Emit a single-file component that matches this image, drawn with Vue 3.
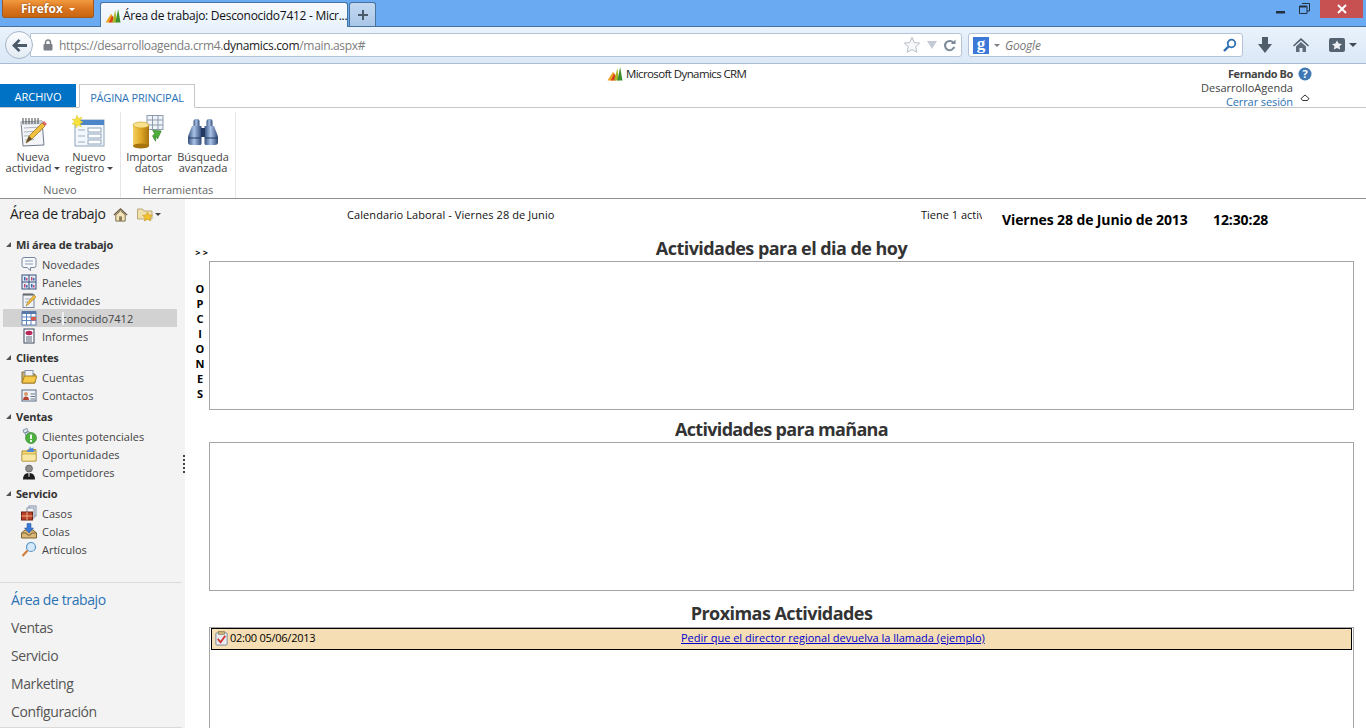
<template>
  <div class="page">
    <!-- barra de titulo de Firefox -->
    <div class="titlebar">
      <div class="ff-button">Firefox <span class="ff-caret"></span></div>
      <div class="tab">
        <svg class="tab-logo" viewBox="0 0 16 16" v-html="icons.logo"></svg>
        <span class="tab-title">Área de trabajo: Desconocido7412 - Micr...</span>
      </div>
      <div class="tab-new">
        <svg viewBox="0 0 12 12" width="12" height="12"><path d="M5 1h2v4h4v2H7v4H5V7H1V5h4z" fill="#4b5a6b" /></svg>
      </div>
      <div class="win-controls">
        <svg class="win-min" viewBox="0 0 10 10" width="10" height="10"><rect x="0" y="7" width="9" height="2.5" fill="#22303f" /></svg>
        <svg class="win-max" viewBox="0 0 11 11" width="11" height="11">
          <path d="M3 .5h7.5V8H8M.5 3H8v7.5H.5z" fill="none" stroke="#22303f" stroke-width="1" />
          <rect x="1" y="3" width="6.5" height="1.5" fill="#22303f" />
        </svg>
        <div class="win-close">
          <svg viewBox="0 0 10 10" width="10" height="10"><path d="M1 1l8 8M9 1l-8 8" stroke="#fff" stroke-width="2" /></svg>
        </div>
      </div>
    </div>

    <!-- barra de navegacion -->
    <div class="navbar">
      <div class="back-btn">
        <svg viewBox="0 0 18 16" width="17" height="15"><path d="M8 1L1 8l7 7 2-2-3.4-3.4H17V6.400H6.600L10 3z" fill="#4d5a68" /></svg>
      </div>
      <div class="urlbar">
        <svg class="lock" viewBox="0 0 10 12" width="10" height="12">
          <path d="M2.500 5V3.500a2.500 2.500 0 0 1 5 0V5" fill="none" stroke="#7a7f86" stroke-width="1.500" />
          <rect x="0.500" y="5" width="9" height="6.500" rx="1" fill="#7a7f86" />
        </svg>
        <span class="url"><span class="url-dim">https://desarrolloagenda.crm4.</span>dynamics.com<span class="url-dim">/main.aspx#</span></span>
        <svg class="url-star" viewBox="0 0 18 18" width="18" height="18">
          <path d="M9 1.500l2.300 5 5.400.6-4 3.700 1.100 5.400L9 13.500l-4.800 2.700 1.100-5.400-4-3.700 5.400-.6z" fill="#f6f8fb" stroke="#b5bcc6" />
        </svg>
        <svg class="url-drop" viewBox="0 0 10 8" width="10" height="8"><path d="M0 0h10L5 8z" fill="#c3cad3" /></svg>
        <svg class="url-reload" viewBox="0 0 14 14" width="13" height="13">
          <path d="M11.500 4.500A5 5 0 1 0 12 8.500" fill="none" stroke="#7d8a99" stroke-width="2.200" />
          <path d="M8.500 5.500h5v-5z" fill="#7d8a99" />
        </svg>
      </div>
      <div class="searchbar">
        <span class="g-badge">g</span>
        <span class="g-caret"></span>
        <span class="search-text">Google</span>
        <svg class="search-glass" viewBox="0 0 14 14" width="14" height="14">
          <circle cx="8.500" cy="5.500" r="3.800" fill="none" stroke="#2a6fb0" stroke-width="1.800" />
          <path d="M5.500 8.500L1 13" stroke="#2a6fb0" stroke-width="2.400" />
        </svg>
      </div>
      <svg class="tool-down" viewBox="0 0 14 16" width="14" height="16"><path d="M4 0h6v7h4l-7 9-7-9h4z" fill="#4f5c6a" /></svg>
      <svg class="tool-home" viewBox="0 0 16 16" width="16" height="16">
        <path d="M8 1L0 8.500l1 1L8 3.200l7 6.300 1-1z" fill="#4f5c6a" />
        <path d="M3 9.500L8 5l5 4.500V15H9.500v-4h-3v4H3z" fill="#5f6c7a" />
      </svg>
      <div class="tool-marks">
        <svg viewBox="0 0 16 14" width="16" height="14">
          <rect width="16" height="14" rx="2" fill="#55626f" />
          <path d="M8 2.500l1.600 3 3.400.4-2.500 2.300.7 3.300L8 10l-3.200 1.500.7-3.300L3 5.900l3.400-.4z" fill="#eef2f6" />
        </svg>
        <span class="tool-caret"></span>
      </div>
    </div>

    <!-- cabecera CRM -->
    <div class="crm-head">
      <div class="crm-tabs">
        <div class="crm-tab-file">ARCHIVO</div>
        <div class="crm-tab-home">PÁGINA PRINCIPAL</div>
      </div>
      <div class="crm-brand">
        <svg viewBox="0 0 16 16" width="16" height="15" v-html="icons.logo"></svg>
        <span>Microsoft Dynamics CRM</span>
      </div>
      <div class="crm-user">
        <div class="user-lines">
          <div class="user-name">Fernando Bo</div>
          <div class="user-org">DesarrolloAgenda</div>
          <div class="user-out">Cerrar sesión</div>
        </div>
        <div class="user-side">
          <svg viewBox="0 0 14 14" width="14" height="14">
            <circle cx="7" cy="7" r="6.500" fill="#3f78b5" />
            <text x="7" y="11" class="help-mark" text-anchor="middle">?</text>
          </svg>
          <svg class="user-chevron" viewBox="0 0 10 8" width="10" height="8">
            <path d="M1 4.500L5 1l4 3.500-1.500 2h-5z" fill="none" stroke="#333" stroke-width="1" />
          </svg>
        </div>
      </div>
    </div>

    <!-- ribbon -->
    <div class="ribbon">
      <div v-for="group in ribbon" :key="group.name" class="rb-group" :class="group.cls">
        <div class="rb-buttons">
          <div v-for="btn in group.buttons" :key="btn.top" class="rb-btn">
            <svg class="rb-icon" viewBox="0 0 34 34" width="34" height="34" v-html="icons[btn.icon]"></svg>
            <div class="rb-label">
              {{ btn.top }}<br />{{ btn.bottom }}<span v-if="btn.menu" class="rb-caret"></span>
            </div>
          </div>
        </div>
        <div class="rb-name">{{ group.name }}</div>
      </div>
    </div>

    <div class="workspace">
      <!-- navegacion lateral -->
      <aside class="sidebar">
        <div class="side-head">
          <span>Área de trabajo</span>
          <svg class="side-home" viewBox="0 0 16 16" width="15" height="15">
            <path d="M8 1L.5 8l1 1L8 3l6.500 6 1-1z" fill="#6b5a3c" />
            <path d="M3 8.500L8 4l5 4.500V15H3z" fill="#f4e3b8" stroke="#7a6a4a" />
            <rect x="6.500" y="10" width="3" height="5" fill="#8a7a58" />
          </svg>
          <svg class="side-fav" viewBox="0 0 16 16" width="16" height="16">
            <path d="M.5 3h5l1.500 2h8v8H.5z" fill="#efe0ae" stroke="#b8a878" />
            <path d="M10.500 6l1.500 3 3.400.4-2.500 2.300.7 3.300-3.100-1.700L7.400 15l.7-3.300-2.500-2.300L9 9z" fill="#f2c22c" stroke="#c08a14" stroke-width=".5" />
          </svg>
          <span class="side-caret"></span>
        </div>

        <div v-for="section in sections" :key="section.title" class="side-section">
          <div class="side-title"><span class="tri"></span>{{ section.title }}</div>
          <div class="side-rows">
            <div
              v-for="item in section.items"
              :key="item.label"
              class="side-row"
              :class="{ selected: item.selected }"
            >
              <svg class="side-icon" viewBox="0 0 16 16" width="16" height="16" v-html="icons[item.icon]"></svg>
              <span>{{ item.label }}</span>
              <span v-if="item.selected" class="ibeam"></span>
            </div>
          </div>
        </div>

        <div class="splitter"></div>

        <div class="side-bottom">
          <div v-for="(area, i) in areas" :key="area" class="area" :class="{ active: i === 0 }">{{ area }}</div>
        </div>
      </aside>

      <!-- contenido -->
      <main class="content">
        <div class="top-line">
          <span class="cal-title">Calendario Laboral - Viernes 28 de Junio</span>
          <span class="notice">Tiene 1 actividad</span>
          <span class="today">Viernes 28 de Junio de 2013</span>
          <span class="clock">12:30:28</span>
        </div>
        <div class="content-body">
          <div class="options">
            <div class="opt-arrows">&gt; &gt;</div>
            <div class="opt-letters">
              <span v-for="(l, i) in 'OPCIONES'" :key="i">{{ l }}</span>
            </div>
          </div>
          <div class="lists">
            <h2 class="list-title">Actividades para el dia de hoy</h2>
            <div class="list-box box-today"></div>
            <h2 class="list-title title-tomorrow">Actividades para mañana</h2>
            <div class="list-box box-tomorrow"></div>
            <h2 class="list-title title-next">Proximas Actividades</h2>
            <div class="list-box box-next">
              <div class="act-row">
                <div class="act-when">
                  <svg viewBox="0 0 16 16" width="15" height="15">
                    <rect x="2" y="2" width="12" height="13" rx="1" fill="#e9edf3" stroke="#7b8794" />
                    <rect x="5" y="0.500" width="6" height="3" fill="#c9b27a" stroke="#7d6a3c" stroke-width=".6" />
                    <path d="M4 8.500l3 3.500 5-7" fill="none" stroke="#d13a2e" stroke-width="2" />
                  </svg>
                  <span>02:00 05/06/2013</span>
                </div>
                <a class="act-link" href="#">Pedir que el director regional devuelva la llamada (ejemplo)</a>
              </div>
            </div>
          </div>
        </div>
      </main>
    </div>
  </div>
</template>

<script setup>
const logoSvg = `
  <path d="M0 15.500L6 6l2.500 4-3 5.500z" fill="#eda31e"/>
  <path d="M3.500 15.500L7 8l2.500 4-1 3.500z" fill="#d9401f"/>
  <path d="M7 15.500L10.500 2l1.500 13.500z" fill="#a8b82a"/>
  <path d="M10.500 15.500L13.500 1 16 15.500z" fill="#3f8f2e"/>`

const notepad = `
  <path d="M5 7l21-1 2 24-21 1z" fill="#f3f5f8" stroke="#6f7b88"/>
  <path d="M5 7l21-1v3L5 10z" fill="#c8d0da"/>
  <path d="M7 3v6M10 3v6M13 3v6M16 3v6M19 3v6M22 3v6" stroke="#666" stroke-width="1.200"/>
  <path d="M8 13l17-1M8 17l17-1M8 21l10-.5M9 25l9-.5" stroke="#aab4c0"/>
  <path d="M10 28l3-7L26 8l3 3-13 13z" fill="#f0c040" stroke="#a07818" stroke-width=".8"/>
  <path d="M26 8l2-2 3 3-2 2z" fill="#d86a6a"/>
  <path d="M10 28l3-7 3 3z" fill="#5a4a30"/>`

const record = `
  <rect x="3" y="5" width="29" height="26" fill="#f3f6fa" stroke="#8ea4bc"/>
  <rect x="3" y="5" width="29" height="5" fill="#4c86c8"/>
  <path d="M6 15h7M6 21h7M6 27h7" stroke="#9db0c4"/>
  <rect x="16" y="13" width="13" height="4" fill="#fff" stroke="#8ea4bc"/>
  <rect x="16" y="19" width="13" height="4" fill="#fff" stroke="#8ea4bc"/>
  <rect x="16" y="25" width="13" height="4" fill="#fff" stroke="#8ea4bc"/>
  <path d="M5 0l1.500 3.500L10 2 8 5.500l3 1.500-3 1.500L9.500 12 6 10l-2 3-.5-3.500L0 9l2.500-2.500L0 4l3.500.5z" fill="#f6e23a" stroke="#d8c020" stroke-width=".4"/>`

const importData = `
  <defs><linearGradient id="gold" x1="0" x2="1" y1="0" y2="0">
    <stop offset="0" stop-color="#f4d060"/><stop offset=".5" stop-color="#e0a826"/><stop offset="1" stop-color="#a87410"/>
  </linearGradient></defs>
  <rect x="15" y="0.500" width="16" height="14" fill="#f0f4f9" stroke="#8c9bad"/>
  <path d="M15 5h16M15 10h16M20.500 .5v14M26 .5v14" stroke="#8c9bad"/>
  <rect x="1" y="10" width="16" height="21" fill="url(#gold)"/>
  <ellipse cx="9" cy="31" rx="8" ry="2.500" fill="#a87410"/>
  <ellipse cx="9" cy="10" rx="8" ry="3" fill="#f9e28a" stroke="#c4962a" stroke-width=".6"/>
  <path d="M20 25v-6l3-1v-4l7 5-7 5v-3z" fill="#4eae3a" stroke="#2e7e22" stroke-width=".6" transform="rotate(-30 24 19)"/>`

const binoculars = `
  <defs><linearGradient id="bino" x1="0" x2="1" y1="0" y2="0">
    <stop offset="0" stop-color="#35527f"/><stop offset=".45" stop-color="#a9c2e6"/><stop offset="1" stop-color="#2f4a78"/>
  </linearGradient></defs>
  <rect x="7.500" y="4" width="6" height="9" rx="2.500" fill="url(#bino)"/>
  <rect x="20.500" y="4" width="6" height="9" rx="2.500" fill="url(#bino)"/>
  <path d="M6 11h9.500v17.500c0 1-1 1.500-2 1.500H5c-2 0-3-1-3-2.500v-6z" fill="url(#bino)"/>
  <path d="M28 11h-9.500v17.500c0 1 1 1.500 2 1.500H29c2 0 3-1 3-2.500v-6z" fill="url(#bino)"/>
  <rect x="15" y="13" width="4" height="9" fill="#24395f"/>
  <path d="M2.500 23h12.500M19 23h12.500" stroke="#24395f" stroke-width="1"/>`

const icons = {
  logo: logoSvg,
  notepad,
  record,
  importData,
  binoculars,
  news: `<path d="M3 1.500h10a2 2 0 0 1 2 2v6a2 2 0 0 1-2 2H9.500v3L6 11.500H3a2 2 0 0 1-2-2v-6a2 2 0 0 1 2-2z" fill="#f6f8fb" stroke="#76869a"/>
    <path d="M4 5h8M4 8h8" stroke="#8b9bb0"/>`,
  dash: `<rect x="1" y="1" width="14" height="14" fill="#e6ecf4" stroke="#37507a"/>
    <path d="M8 1v14M1 8h14" stroke="#37507a"/>
    <rect x="3" y="3" width="1.500" height="3.500" fill="#3a68b0"/><rect x="5" y="4" width="1.500" height="2.500" fill="#c04878"/>
    <rect x="10" y="3" width="1.500" height="3.500" fill="#c04878"/><rect x="12" y="4" width="1.500" height="2.500" fill="#3a68b0"/>
    <rect x="3" y="10" width="1.500" height="3.500" fill="#c04878"/><rect x="5" y="11" width="1.500" height="2.500" fill="#3a68b0"/>
    <rect x="10" y="10" width="1.500" height="3.500" fill="#3a68b0"/><rect x="12" y="11" width="1.500" height="2.500" fill="#c04878"/>`,
  activity: `<rect x="2" y="2.500" width="11" height="13" fill="#f0f3f7" stroke="#7a8694"/>
    <path d="M3 1v3M5 1v3M7 1v3M9 1v3M11 1v3" stroke="#555"/>
    <path d="M4 7h6M4 10h4" stroke="#a4aeba"/>
    <path d="M5 14l1.500-3.500L13 3l2 2-7 7z" fill="#eebc3e" stroke="#96701a" stroke-width=".5"/>`,
  calendar: `<rect x="1" y="2" width="14" height="13" fill="#fff" stroke="#5a7aa8"/>
    <rect x="1" y="1" width="14" height="3" fill="#5878a8"/>
    <path d="M1 7h14M1 10.500h14M5.500 4v11M10 4v11" stroke="#5a86c4"/>
    <rect x="10" y="7" width="5" height="3.500" fill="#d85a4a"/>`,
  report: `<rect x="3" y="1" width="10" height="14" fill="#fafbfd" stroke="#39465a"/>
    <ellipse cx="8" cy="5" rx="3.500" ry="2.200" fill="#b8285a"/>
    <path d="M5 9h6M5 11h6M5 13h6" stroke="#5d6878"/>`,
  accounts: `<path d="M1 3h5l1 2h7v9H1z" fill="#c8b078" stroke="#85703c"/>
    <rect x="4" y="1.500" width="8" height="7" fill="#eef2f8" stroke="#8a96a8"/>
    <path d="M1 14l2.500-7H16l-2.500 7z" fill="#f5c94a" stroke="#a98220"/>`,
  contacts: `<rect x="1" y="3" width="14" height="11" fill="#eef2f8" stroke="#5c6c84"/>
    <circle cx="5" cy="7" r="2" fill="#d89a6a"/>
    <path d="M2 13c0-2.500 1.500-3.500 3-3.500s3 1 3 3.500z" fill="#b0442e"/>
    <path d="M9.500 7H14M9.500 9.500H14M9.500 12H14" stroke="#6a7a92"/>`,
  leads: `<path d="M2 2l4-1.500 1 3-4 1.500zM4 5l4-1.500 1 3-4 1.500z" fill="#dfe6ee" stroke="#6e8298" stroke-width=".8"/>
    <circle cx="10" cy="10" r="5.500" fill="#4eb03e" stroke="#2c8026" stroke-width=".6"/>
    <path d="M10 6.500v4.500M10 12v2" stroke="#fff" stroke-width="1.800"/>`,
  opportunity: `<path d="M1 5h5l1-1.500h8V15H1z" fill="#f6d870" stroke="#b09030"/>
    <path d="M1 8h14v7H1z" fill="#f9e8a4" stroke="#b09030" stroke-width=".6"/>
    <path d="M9 0l1 2.500 2.500-1L12 4l2.500.5-2 1.500H6.500l-1-1.500L8 4z" fill="#4c86d8"/>`,
  competitor: `<circle cx="8" cy="4.500" r="3.500" fill="#8c8c8c" stroke="#4a4a4a" stroke-width=".6"/>
    <path d="M2 15.500c0-4.500 2.500-6.500 6-6.500s6 2 6 6.500z" fill="#1c1c1c"/>
    <path d="M7 9h2l-.5 4h-1z" fill="#aaa"/>`,
  cases: `<rect x="8" y="1" width="7" height="10" fill="#e9eef5" stroke="#8692a4"/>
    <rect x="6" y="3" width="7" height="10" fill="#f3f6fa" stroke="#8692a4"/>
    <rect x="0.500" y="7" width="11" height="8" fill="#b8402a" stroke="#6e2414"/>
    <path d="M6 7v8M.5 11h11" stroke="#f0b080"/>`,
  queues: `<path d="M0.500 10L4 7h8l3.500 3v5H.5z" fill="#d9b878" stroke="#7e6330"/>
    <path d="M0.500 10h5l1 2h3l1-2h5" fill="none" stroke="#7e6330"/>
    <path d="M6 .5h4V5h2.500L8 10 3.500 5H6z" fill="#3a78d8" stroke="#1e4c9c" stroke-width=".5"/>`,
  articles: `<circle cx="10" cy="6" r="4.500" fill="#d4eafa" stroke="#5a94c8" stroke-width="1.200"/>
    <path d="M6.500 9.500L1.500 15" stroke="#d08040" stroke-width="2.200"/>`
}

const ribbon = [
  {
    name: 'Nuevo',
    cls: 'rb-new',
    buttons: [
      { top: 'Nueva', bottom: 'actividad', icon: 'notepad', menu: true },
      { top: 'Nuevo', bottom: 'registro', icon: 'record', menu: true }
    ]
  },
  {
    name: 'Herramientas',
    cls: 'rb-tools',
    buttons: [
      { top: 'Importar', bottom: 'datos', icon: 'importData' },
      { top: 'Búsqueda', bottom: 'avanzada', icon: 'binoculars' }
    ]
  }
]

const sections = [
  {
    title: 'Mi área de trabajo',
    items: [
      { label: 'Novedades', icon: 'news' },
      { label: 'Paneles', icon: 'dash' },
      { label: 'Actividades', icon: 'activity' },
      { label: 'Desconocido7412', icon: 'calendar', selected: true },
      { label: 'Informes', icon: 'report' }
    ]
  },
  {
    title: 'Clientes',
    items: [
      { label: 'Cuentas', icon: 'accounts' },
      { label: 'Contactos', icon: 'contacts' }
    ]
  },
  {
    title: 'Ventas',
    items: [
      { label: 'Clientes potenciales', icon: 'leads' },
      { label: 'Oportunidades', icon: 'opportunity' },
      { label: 'Competidores', icon: 'competitor' }
    ]
  },
  {
    title: 'Servicio',
    items: [
      { label: 'Casos', icon: 'cases' },
      { label: 'Colas', icon: 'queues' },
      { label: 'Artículos', icon: 'articles' }
    ]
  }
]

const areas = ['Área de trabajo', 'Ventas', 'Servicio', 'Marketing', 'Configuración']
</script>

<style>
html,
body {
  margin: 0;
  overflow: hidden;
  background: #fff;
}
</style>

<style scoped>
.page {
  height: 728px;
  overflow: hidden;
  display: flex;
  flex-direction: column;
  font-family: "Open Sans", "Noto Sans", sans-serif;
  font-size: 11px;
  color: #444;
}

/* titlebar */
.titlebar {
  height: 26px;
  flex: none;
  display: flex;
  background: #6aaaf3;
  border-bottom: 1px solid #47749f;
  position: relative;
}
.ff-button {
  width: 92px;
  height: 18px;
  margin-left: 2px;
  box-sizing: border-box;
  border: 1px solid #a5561a;
  border-top: 0;
  border-radius: 0 0 3px 3px;
  background: linear-gradient(#f29a3e, #d9731f 55%, #c8660f);
  color: #fff;
  font-weight: 700;
  font-size: 12px;
  line-height: 17px;
  text-align: center;
  text-shadow: 0 0 2px #7a3a08;
}
.ff-caret {
  display: inline-block;
  margin-left: 3px;
  vertical-align: 2px;
  border: 3.500px solid transparent;
  border-top-color: #fff;
  border-bottom: 0;
}
.tab {
  width: 248px;
  height: 25px;
  margin: 2px 0 0 6px;
  box-sizing: border-box;
  display: flex;
  align-items: center;
  gap: 2px;
  padding: 0 0 0 4px;
  background: linear-gradient(#f6faff, #e9f2fc);
  border: 1px solid #47749f;
  border-bottom: 0;
  border-radius: 3px 3px 0 0;
  position: relative;
  z-index: 1;
}
.tab-logo {
  width: 16px;
  height: 15px;
  flex: none;
}
.tab-title {
  color: #111;
  font-size: 12px;
  white-space: nowrap;
  letter-spacing: -0.28px;
}
.tab-new {
  width: 27px;
  height: 24px;
  margin: 2px 0 0 1px;
  box-sizing: border-box;
  display: flex;
  align-items: center;
  justify-content: center;
  background: linear-gradient(#c4d9f1, #a9c6e8);
  border: 1px solid #47749f;
  border-bottom: 0;
  border-radius: 3px 3px 0 0;
}
.win-controls {
  margin-left: auto;
  display: flex;
  align-items: flex-start;
  padding-right: 3px;
}
.win-min {
  margin: 4px 13px 0 0;
}
.win-max {
  margin: 3px 10px 0 0;
}
.win-close {
  width: 43px;
  height: 18px;
  display: flex;
  align-items: center;
  justify-content: center;
  background: #c75050;
}

/* navbar */
.navbar {
  height: 37px;
  flex: none;
  box-sizing: border-box;
  display: flex;
  align-items: center;
  background: linear-gradient(#e9f2fc, #dbe8f6);
  border-bottom: 1px solid #a9bdd2;
  position: relative;
}
.back-btn {
  width: 28px;
  height: 28px;
  margin-left: 5px;
  flex: none;
  box-sizing: border-box;
  border: 1px solid #a5b5c6;
  border-radius: 50%;
  background: linear-gradient(#fbfcfe, #e3ebf4);
  display: flex;
  align-items: center;
  justify-content: center;
  position: relative;
  z-index: 1;
}
.urlbar {
  width: 932px;
  height: 24px;
  margin-left: -3px;
  box-sizing: border-box;
  display: flex;
  align-items: center;
  padding: 0 4px 0 12px;
  background: #fff;
  border: 1px solid #b4c4d6;
  border-radius: 0 3px 3px 0;
}
.lock {
  flex: none;
}
.url {
  margin-left: 6px;
  font-size: 12px;
  color: #222;
  letter-spacing: -0.33px;
}
.url-dim {
  color: #7d7d7d;
}
.url-star {
  margin-left: auto;
}
.url-drop {
  margin: 0 6px 0 6px;
}
.url-reload {
  margin-right: 1px;
}
.searchbar {
  width: 275px;
  height: 24px;
  margin-left: 6px;
  box-sizing: border-box;
  display: flex;
  align-items: center;
  padding: 0 5px 0 4px;
  background: #fff;
  border: 1px solid #b4c4d6;
  border-radius: 3px;
}
.g-badge {
  width: 16px;
  height: 17px;
  background: #3c78d8;
  color: #fff;
  font-family: "Liberation Serif", serif;
  font-weight: 700;
  font-size: 17px;
  line-height: 13px;
  text-align: center;
}
.g-caret {
  margin-left: 5px;
  border: 3px solid transparent;
  border-top-color: #7a7f86;
  border-bottom: 0;
}
.search-text {
  margin-left: 5px;
  font-size: 12px;
  font-style: italic;
  color: #777;
  letter-spacing: -0.2px;
}
.search-glass {
  margin-left: auto;
}
.tool-down {
  margin-left: 15px;
}
.tool-home {
  margin-left: 21px;
}
.tool-marks {
  margin-left: 20px;
  display: flex;
  align-items: center;
  gap: 4px;
}
.tool-caret {
  border: 4px solid transparent;
  border-top-color: #3f4a55;
  border-bottom: 0;
}

/* cabecera CRM */
.crm-head {
  height: 44px;
  flex: none;
  box-sizing: border-box;
  display: grid;
  grid-template-columns: 607px auto 1fr;
  grid-template-rows: 43px;
  border-bottom: 1px solid #c6c6c6;
  background: #fff;
}
.crm-tabs {
  display: flex;
  align-items: flex-end;
  margin-bottom: -1px;
}
.crm-tab-file {
  width: 76px;
  height: 23px;
  margin-bottom: 1px;
  background: #0072c6;
  color: #fff;
  line-height: 26px;
  text-align: center;
}
.crm-tab-home {
  width: 116px;
  height: 24px;
  margin-left: 3px;
  box-sizing: border-box;
  border: 1px solid #c6c6c6;
  border-bottom-color: #fff;
  color: #2a72b5;
  line-height: 26px;
  text-align: center;
  letter-spacing: -0.2px;
}
.crm-brand {
  display: flex;
  align-items: flex-start;
  gap: 3px;
  padding-top: 2px;
  font-size: 11.500px;
  line-height: 16px;
  color: #222;
  letter-spacing: -0.6px;
}
.crm-user {
  display: flex;
  justify-content: flex-end;
  padding: 3px 54px 0 0;
}
.user-lines {
  text-align: right;
  line-height: 14px;
  color: #444;
  padding-right: 1px;
}
.user-name {
  font-weight: 700;
  letter-spacing: -0.4px;
}
.user-out {
  color: #2a72b5;
  letter-spacing: -0.1px;
}
.user-side {
  margin-left: 4px;
  width: 14px;
  display: flex;
  flex-direction: column;
  align-items: center;
}
.help-mark {
  font-size: 11px;
  font-weight: 700;
  fill: #fff;
}
.user-chevron {
  margin-top: 13px;
}

/* ribbon */
.ribbon {
  height: 91px;
  flex: none;
  box-sizing: border-box;
  display: flex;
  border-bottom: 1px solid #8f8f8f;
  background: #fff;
  padding-top: 4px;
}
.rb-group {
  height: 86px;
  box-sizing: border-box;
  border-right: 1px solid #e6e6e6;
  display: flex;
  flex-direction: column;
  align-items: center;
}
.rb-new {
  width: 121px;
}
.rb-tools {
  width: 115px;
}
.rb-buttons {
  flex: 1;
  align-self: stretch;
  display: flex;
}
.rb-new .rb-buttons {
  padding-left: 7px;
  gap: 4px;
}
.rb-tools .rb-buttons {
  padding-left: 2px;
  gap: 2px;
}
.rb-btn {
  display: flex;
  flex-direction: column;
  align-items: center;
  width: 52px;
}
.rb-icon {
  margin-top: 3px;
  flex: none;
}
.rb-label {
  margin-top: 2px;
  line-height: 11px;
  text-align: center;
  white-space: nowrap;
  color: #444;
}
.rb-caret {
  display: inline-block;
  margin-left: 3px;
  vertical-align: 2px;
  border: 3px solid transparent;
  border-top-color: #444;
  border-bottom: 0;
}
.rb-name {
  height: 15px;
  line-height: 15px;
  color: #666;
  margin-bottom: 1px;
}

/* workspace */
.workspace {
  flex: 1;
  min-height: 0;
  display: flex;
}
.sidebar {
  width: 185px;
  flex: none;
  display: flex;
  flex-direction: column;
  background: #f3f3f3;
  position: relative;
}
.side-head {
  height: 36px;
  flex: none;
  box-sizing: border-box;
  padding: 5px 0 0 10px;
  display: flex;
  align-items: flex-start;
  font-size: 14px;
  line-height: 20px;
  color: #222;
  letter-spacing: -0.35px;
}
.side-home {
  margin: 3px 0 0 8px;
}
.side-fav {
  margin: 2px 0 0 9px;
}
.side-caret {
  margin: 9px 0 0 2px;
  border: 3px solid transparent;
  border-top-color: #444;
  border-bottom: 0;
}
.side-section {
  margin-bottom: 3px;
}
.side-title {
  height: 18px;
  display: flex;
  align-items: center;
  font-weight: 700;
  color: #333;
  padding-left: 6px;
  letter-spacing: -0.2px;
}
.tri {
  width: 0;
  height: 0;
  margin-right: 5px;
  border-left: 5px solid transparent;
  border-bottom: 5px solid #555;
}
.side-rows {
  margin-top: 2px;
}
.side-row {
  height: 18px;
  display: flex;
  align-items: center;
  margin: 0 8px 0 3px;
  padding-left: 18px;
  position: relative;
  color: #444;
}
.side-row.selected {
  background: #d2d2d2;
}
.side-icon {
  flex: none;
  margin-right: 5px;
}
.ibeam {
  position: absolute;
  left: 59px;
  top: 3px;
  width: 2px;
  height: 13px;
  background: #f0f0f0;
}
.splitter {
  position: absolute;
  right: 0;
  top: 256px;
  width: 2px;
  height: 18px;
  background: repeating-linear-gradient(#444 0 2px, transparent 2px 4px);
}
.side-bottom {
  margin-top: auto;
  height: 146px;
  box-sizing: border-box;
  margin-right: 3px;
  padding-top: 2px;
  border-top: 1px solid #d9d9d9;
  border-bottom: 1px solid #d9d9d9;
}
.area {
  height: 28px;
  padding-left: 11px;
  font-size: 14px;
  line-height: 29px;
  color: #555;
  letter-spacing: -0.4px;
}
.area.active {
  color: #2a72b5;
}

/* contenido */
.content {
  flex: 1;
  min-width: 0;
  background: #fff;
  display: flex;
  flex-direction: column;
}
.top-line {
  height: 38px;
  flex: none;
  box-sizing: border-box;
  padding: 8px 0 0 162px;
  display: flex;
  align-items: flex-start;
  color: #111;
  line-height: 15px;
}
.cal-title {
  width: 574px;
  flex: none;
  letter-spacing: 0.08px;
}
.notice {
  width: 61px;
  flex: none;
  overflow: hidden;
  white-space: nowrap;
}
.today,
.clock {
  margin-top: 4px;
  font-size: 14px;
  line-height: 17px;
  font-weight: 700;
  color: #000;
  white-space: nowrap;
}
.today {
  margin-left: 20px;
  width: 186px;
  flex: none;
  letter-spacing: -0.12px;
}
.clock {
  margin-left: 25px;
  letter-spacing: -0.1px;
}
.content-body {
  flex: 1;
  min-height: 0;
  display: flex;
}
.options {
  width: 24px;
  flex: none;
  text-align: center;
  color: #000;
}
.opt-arrows {
  margin-top: 9px;
  height: 14px;
  line-height: 14px;
  font-size: 9px;
  font-weight: 700;
  padding-left: 9px;
}
.opt-letters {
  margin-top: 21px;
  padding-left: 6px;
  display: flex;
  flex-direction: column;
  font-size: 11px;
  font-weight: 700;
  line-height: 15px;
}
.lists {
  width: 1145px;
  flex: none;
}
.list-title {
  margin: 0;
  height: 22px;
  font-size: 18px;
  line-height: 22px;
  font-weight: 700;
  text-align: center;
  color: #333;
  letter-spacing: -0.55px;
}
.title-tomorrow {
  margin-top: 8px;
  letter-spacing: -0.68px;
}
.title-next {
  margin-top: 11px;
}
.list-box {
  box-sizing: border-box;
  border: 1px solid #a5a5a5;
  background: #fff;
}
.box-today {
  height: 149px;
  margin-top: 2px;
}
.box-tomorrow {
  height: 149px;
  margin-top: 2px;
}
.box-next {
  margin-top: 3px;
  height: 130px;
  padding: 0 1px;
}
.act-row {
  height: 22px;
  box-sizing: border-box;
  border: 1px solid #000;
  background: #f5deb3;
  display: grid;
  grid-template-columns: 469px 1fr;
  align-items: start;
  color: #000;
  padding-top: 1px;
  line-height: 15px;
}
.act-when {
  display: flex;
  align-items: flex-start;
  gap: 1px;
  padding-left: 2px;
  letter-spacing: -0.25px;
}
.act-when svg {
  margin-top: 1px;
}
.act-link {
  color: #0000cc;
  text-decoration: underline;
}
</style>
